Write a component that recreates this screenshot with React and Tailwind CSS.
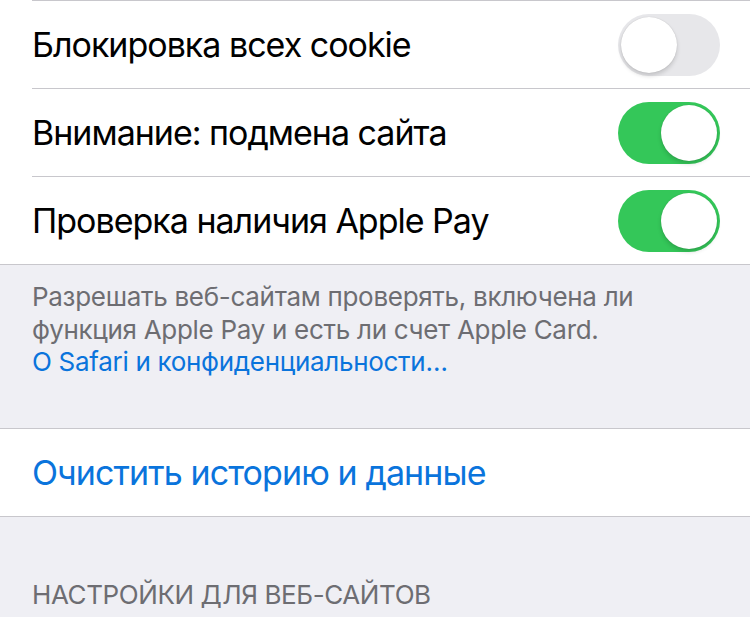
import React from "react";

function Toggle({ on }) {
  return (
    <div
      className={
        "relative w-[102px] h-[62px] rounded-full shrink-0 " +
        (on ? "bg-[#34c759]" : "bg-[#e7e7ea]")
      }
    >
      <div
        className={
          "absolute top-[3px] w-[56px] h-[56px] rounded-full bg-white shadow-[0_3px_4px_rgba(0,0,0,0.15),0_0_1px_rgba(0,0,0,0.2)] " +
          (on ? "right-[3px]" : "left-[3px]")
        }
      />
    </div>
  );
}

function Row({ label, on }) {
  return (
    <div className="pl-[32px] bg-white">
      <div className="flex items-center justify-between h-[88px] border-t border-[#c8c7cc] pr-[30px]">
        <span className="text-[34px] text-black leading-none tracking-[-1px]">{label}</span>
        <Toggle on={on} />
      </div>
    </div>
  );
}

export default function App() {
  return (
    <div
      className="w-[750px] h-[617px] overflow-hidden bg-[#efeff4]"
      style={{ fontFamily: "Inter, 'Noto Sans', sans-serif" }}
    >
      <div className="bg-white border-b border-[#c8c7cc]">
        <Row label="Блокировка всех cookie" on={false} />
        <Row label="Внимание: подмена сайта" on={true} />
        <Row label="Проверка наличия Apple Pay" on={true} />
      </div>
      <div className="pl-[32px] pr-[30px] pt-[16px] h-[163px] text-[26px] leading-[32.5px] tracking-[-0.3px] text-[#6d6d72]">
        <p>Разрешать веб-сайтам проверять, включена ли</p>
        <p>функция Apple Pay и есть ли счет Apple Card.</p>
        <p className="text-[#0a74dc]">О Safari и конфиденциальности…</p>
      </div>
      <div className="bg-white border-y border-[#c8c7cc] h-[89px] pl-[32px] flex items-center">
        <span className="text-[34px] text-[#0a74dc] leading-none tracking-[-0.9px]">Очистить историю и данные</span>
      </div>
      <div className="pl-[32px] pt-[62px] text-[26px] leading-[32px] text-[#6d6d72] tracking-[-0.4px]">
        НАСТРОЙКИ ДЛЯ ВЕБ-САЙТОВ
      </div>
    </div>
  );
}
